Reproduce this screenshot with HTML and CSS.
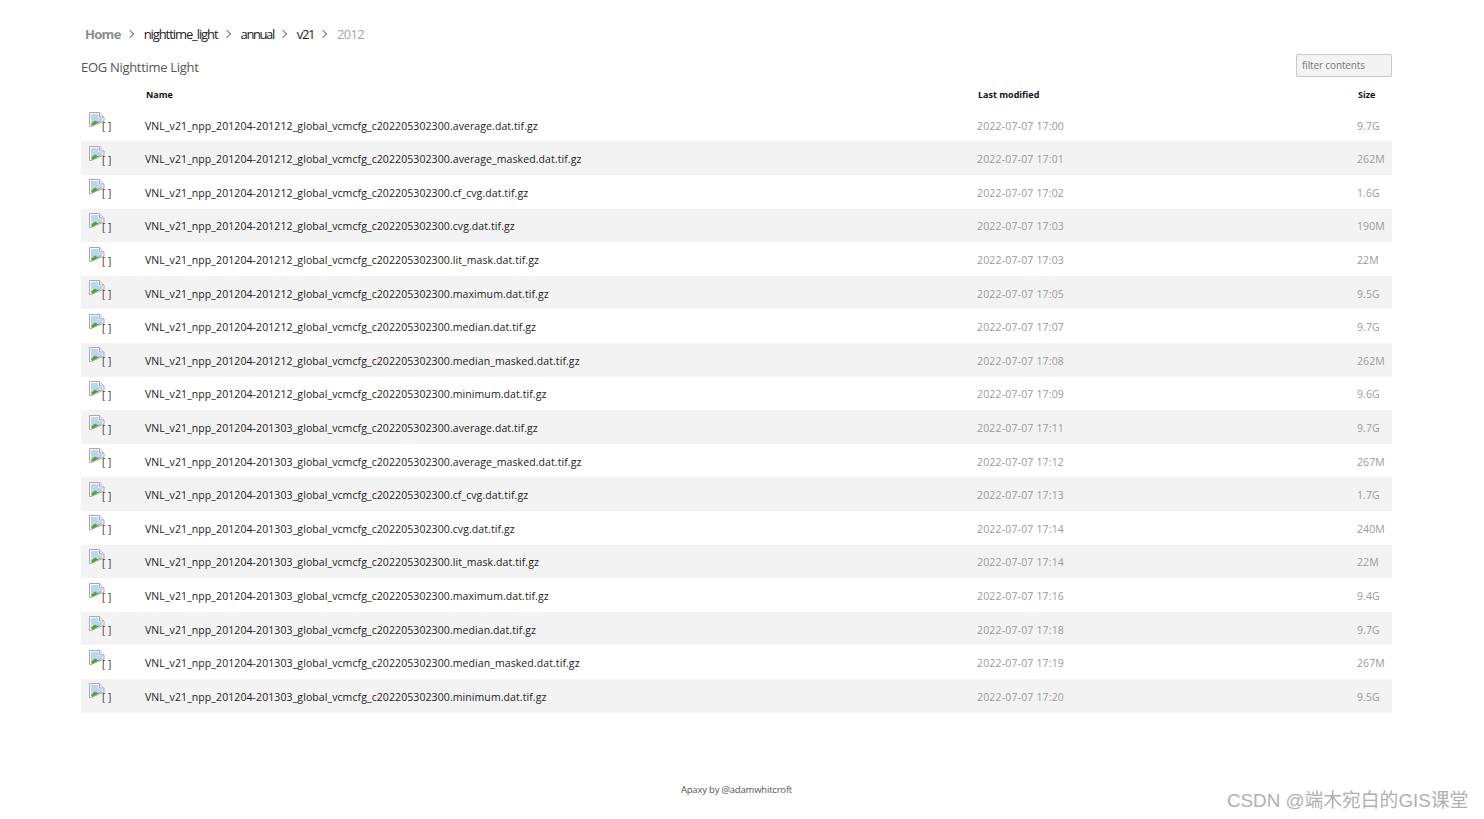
FILE: index.html
```html
<!DOCTYPE html>
<html lang="en">
<head>
    <meta charset="UTF-8">
    <meta name="viewport" content="width=device-width, initial-scale=1.0">
    <title>EOG Nighttime Light</title>
    <link rel="stylesheet" href="styles.css">
</head>
<body>
    <!-- shared broken image icon -->
    <svg class="defs" width="0" height="0">
        <symbol id="broken" viewBox="0 0 16 16">
            <path d="M.5 .5H10.500L15 5V9L2 14.500H.5Z" fill="#fff" stroke="#a8a8a8"/>
            <path d="M10.500 .5V5H15" fill="#eee" stroke="#a8a8a8"/>
            <path d="M2 2H9.500V6H13.500V8.500L2 12Z" fill="#bcd6f0"/>
            <path d="M2 12 6 8.500 8.500 10 13.500 8.500 3 14Z" fill="#4fa52d"/>
        </symbol>
    </svg>

    <div class="wrapper">
        <!-- breadcrumb -->
        <nav class="crumbs">
            <a class="home" href="#">Home</a>
            <span class="sep"></span>
            <a href="#">nighttime_light</a>
            <span class="sep"></span>
            <a class="tight" href="#">annual</a>
            <span class="sep"></span>
            <a class="tight" href="#">v21</a>
            <span class="sep"></span>
            <span class="current">2012</span>
        </nav>

        <div class="title-row">
            <h1>EOG Nighttime Light</h1>
            <input class="filter" type="text" placeholder="filter contents">
        </div>

        <table class="listing">
            <thead>
                <tr>
                    <th class="col-icon"></th>
                    <th class="col-name">Name</th>
                    <th class="col-date">Last modified</th>
                    <th class="col-size">Size</th>
                </tr>
            </thead>
            <tbody>
                <tr><td class="col-icon"><svg class="ico"><use href="#broken"/></svg><span>[ ]</span></td><td class="col-name"><a href="#">VNL_v21_npp_201204-201212_global_vcmcfg_c202205302300.average.dat.tif.gz</a></td><td class="col-date">2022-07-07 17:00</td><td class="col-size">9.7G</td></tr>
                <tr><td class="col-icon"><svg class="ico"><use href="#broken"/></svg><span>[ ]</span></td><td class="col-name"><a href="#">VNL_v21_npp_201204-201212_global_vcmcfg_c202205302300.average_masked.dat.tif.gz</a></td><td class="col-date">2022-07-07 17:01</td><td class="col-size">262M</td></tr>
                <tr><td class="col-icon"><svg class="ico"><use href="#broken"/></svg><span>[ ]</span></td><td class="col-name"><a href="#">VNL_v21_npp_201204-201212_global_vcmcfg_c202205302300.cf_cvg.dat.tif.gz</a></td><td class="col-date">2022-07-07 17:02</td><td class="col-size">1.6G</td></tr>
                <tr><td class="col-icon"><svg class="ico"><use href="#broken"/></svg><span>[ ]</span></td><td class="col-name"><a href="#">VNL_v21_npp_201204-201212_global_vcmcfg_c202205302300.cvg.dat.tif.gz</a></td><td class="col-date">2022-07-07 17:03</td><td class="col-size">190M</td></tr>
                <tr><td class="col-icon"><svg class="ico"><use href="#broken"/></svg><span>[ ]</span></td><td class="col-name"><a href="#">VNL_v21_npp_201204-201212_global_vcmcfg_c202205302300.lit_mask.dat.tif.gz</a></td><td class="col-date">2022-07-07 17:03</td><td class="col-size">22M</td></tr>
                <tr><td class="col-icon"><svg class="ico"><use href="#broken"/></svg><span>[ ]</span></td><td class="col-name"><a href="#">VNL_v21_npp_201204-201212_global_vcmcfg_c202205302300.maximum.dat.tif.gz</a></td><td class="col-date">2022-07-07 17:05</td><td class="col-size">9.5G</td></tr>
                <tr><td class="col-icon"><svg class="ico"><use href="#broken"/></svg><span>[ ]</span></td><td class="col-name"><a href="#">VNL_v21_npp_201204-201212_global_vcmcfg_c202205302300.median.dat.tif.gz</a></td><td class="col-date">2022-07-07 17:07</td><td class="col-size">9.7G</td></tr>
                <tr><td class="col-icon"><svg class="ico"><use href="#broken"/></svg><span>[ ]</span></td><td class="col-name"><a href="#">VNL_v21_npp_201204-201212_global_vcmcfg_c202205302300.median_masked.dat.tif.gz</a></td><td class="col-date">2022-07-07 17:08</td><td class="col-size">262M</td></tr>
                <tr><td class="col-icon"><svg class="ico"><use href="#broken"/></svg><span>[ ]</span></td><td class="col-name"><a href="#">VNL_v21_npp_201204-201212_global_vcmcfg_c202205302300.minimum.dat.tif.gz</a></td><td class="col-date">2022-07-07 17:09</td><td class="col-size">9.6G</td></tr>
                <tr><td class="col-icon"><svg class="ico"><use href="#broken"/></svg><span>[ ]</span></td><td class="col-name"><a href="#">VNL_v21_npp_201204-201303_global_vcmcfg_c202205302300.average.dat.tif.gz</a></td><td class="col-date">2022-07-07 17:11</td><td class="col-size">9.7G</td></tr>
                <tr><td class="col-icon"><svg class="ico"><use href="#broken"/></svg><span>[ ]</span></td><td class="col-name"><a href="#">VNL_v21_npp_201204-201303_global_vcmcfg_c202205302300.average_masked.dat.tif.gz</a></td><td class="col-date">2022-07-07 17:12</td><td class="col-size">267M</td></tr>
                <tr><td class="col-icon"><svg class="ico"><use href="#broken"/></svg><span>[ ]</span></td><td class="col-name"><a href="#">VNL_v21_npp_201204-201303_global_vcmcfg_c202205302300.cf_cvg.dat.tif.gz</a></td><td class="col-date">2022-07-07 17:13</td><td class="col-size">1.7G</td></tr>
                <tr><td class="col-icon"><svg class="ico"><use href="#broken"/></svg><span>[ ]</span></td><td class="col-name"><a href="#">VNL_v21_npp_201204-201303_global_vcmcfg_c202205302300.cvg.dat.tif.gz</a></td><td class="col-date">2022-07-07 17:14</td><td class="col-size">240M</td></tr>
                <tr><td class="col-icon"><svg class="ico"><use href="#broken"/></svg><span>[ ]</span></td><td class="col-name"><a href="#">VNL_v21_npp_201204-201303_global_vcmcfg_c202205302300.lit_mask.dat.tif.gz</a></td><td class="col-date">2022-07-07 17:14</td><td class="col-size">22M</td></tr>
                <tr><td class="col-icon"><svg class="ico"><use href="#broken"/></svg><span>[ ]</span></td><td class="col-name"><a href="#">VNL_v21_npp_201204-201303_global_vcmcfg_c202205302300.maximum.dat.tif.gz</a></td><td class="col-date">2022-07-07 17:16</td><td class="col-size">9.4G</td></tr>
                <tr><td class="col-icon"><svg class="ico"><use href="#broken"/></svg><span>[ ]</span></td><td class="col-name"><a href="#">VNL_v21_npp_201204-201303_global_vcmcfg_c202205302300.median.dat.tif.gz</a></td><td class="col-date">2022-07-07 17:18</td><td class="col-size">9.7G</td></tr>
                <tr><td class="col-icon"><svg class="ico"><use href="#broken"/></svg><span>[ ]</span></td><td class="col-name"><a href="#">VNL_v21_npp_201204-201303_global_vcmcfg_c202205302300.median_masked.dat.tif.gz</a></td><td class="col-date">2022-07-07 17:19</td><td class="col-size">267M</td></tr>
                <tr><td class="col-icon"><svg class="ico"><use href="#broken"/></svg><span>[ ]</span></td><td class="col-name"><a href="#">VNL_v21_npp_201204-201303_global_vcmcfg_c202205302300.minimum.dat.tif.gz</a></td><td class="col-date">2022-07-07 17:20</td><td class="col-size">9.5G</td></tr>
            </tbody>
        </table>

        <footer class="credit">Apaxy by @adamwhitcroft</footer>
    </div>

    <div class="watermark">CSDN @端木宛白的GIS课堂</div>
</body>
</html>
```

FILE: styles.css
```css
/* general */
body {
    margin: 0;
    background: #fff;
    font-family: "Open Sans", "Noto Sans", sans-serif;
    font-size: 10px;
    color: #222;
}

a {
    color: inherit;
    text-decoration: none;
}

.defs {
    display: block;
}

.wrapper {
    width: 1311px;
    margin-left: 81px;
    padding-top: 24px;
}

/* breadcrumb */
.crumbs {
    display: flex;
    align-items: center;
    height: 20px;
    padding-left: 4px;
    font-size: 13px;
    letter-spacing: -1.08px;
    color: #222;
}

.crumbs .home {
    color: #8d8d8d;
    font-weight: 700;
    letter-spacing: -0.7px;
}

.crumbs .tight {
    letter-spacing: -1.4px;
}

.crumbs .current {
    color: #a5a5a5;
    letter-spacing: -0.7px;
}

.sep {
    width: 5px;
    height: 5px;
    margin: 0 11px 0 6px;
    border-top: 1px solid #777;
    border-right: 1px solid #777;
    transform: rotate(45deg);
}

/* title and filter */
.title-row {
    display: flex;
    justify-content: space-between;
    align-items: center;
    height: 24px;
    margin-top: 9px;
}

.title-row h1 {
    margin: 0;
    padding-top: 4px;
    font-size: 13px;
    font-weight: 400;
    letter-spacing: -0.3px;
    color: #555;
}

.filter {
    box-sizing: border-box;
    width: 96px;
    height: 23px;
    padding: 0 5px;
    background: #f3f3f3;
    border: 1px solid #c9c9c9;
    border-radius: 2px;
    font-family: inherit;
    font-size: 10px;
    letter-spacing: -0.13px;
    outline: none;
}

.filter::placeholder {
    color: #777;
    opacity: 1;
}

/* file table */
.listing {
    width: 100%;
    margin-top: 3.9px;
    border-collapse: collapse;
    table-layout: fixed;
}

.listing th {
    height: 27px;
    padding: 0;
    text-align: left;
    font-size: 9px;
    font-weight: 700;
    color: #111;
}

.listing td {
    box-sizing: border-box;
    height: 33.6px;
    padding: 2px 0 0;
    font-size: 10.5px;
    letter-spacing: 0.09px;
    white-space: nowrap;
}

.listing tbody tr:nth-child(even) {
    background: #f3f3f3;
}

.col-icon {
    width: 64px;
}

th.col-name {
    padding-left: 1px;
}

.listing .col-date {
    width: 379px;
    color: #9a9a9a;
    letter-spacing: 0.17px;
}

.listing th.col-date {
    padding-left: 1px;
    color: #111;
    letter-spacing: 0;
}

.listing .col-size {
    width: 34px;
    color: #9a9a9a;
}

.listing th.col-size {
    padding-left: 1px;
    color: #111;
}

.listing td.col-icon {
    padding: 0 0 4px 8px;
    color: #333;
}

.ico {
    width: 16px;
    height: 16px;
    vertical-align: 2px;
}

.listing td.col-icon span {
    margin-left: -3px;
    font-size: 10px;
}

/* footer */
.credit {
    margin-top: 70px;
    text-align: center;
    font-size: 9.5px;
    letter-spacing: -0.2px;
    color: #555;
}

/* watermark over the page */
.watermark {
    position: absolute;
    top: 785px;
    left: 1227px;
    font-family: "Liberation Sans", "Noto Sans CJK SC", sans-serif;
    font-size: 18.8px;
    color: #b0b0b0;
    white-space: nowrap;
}
```
